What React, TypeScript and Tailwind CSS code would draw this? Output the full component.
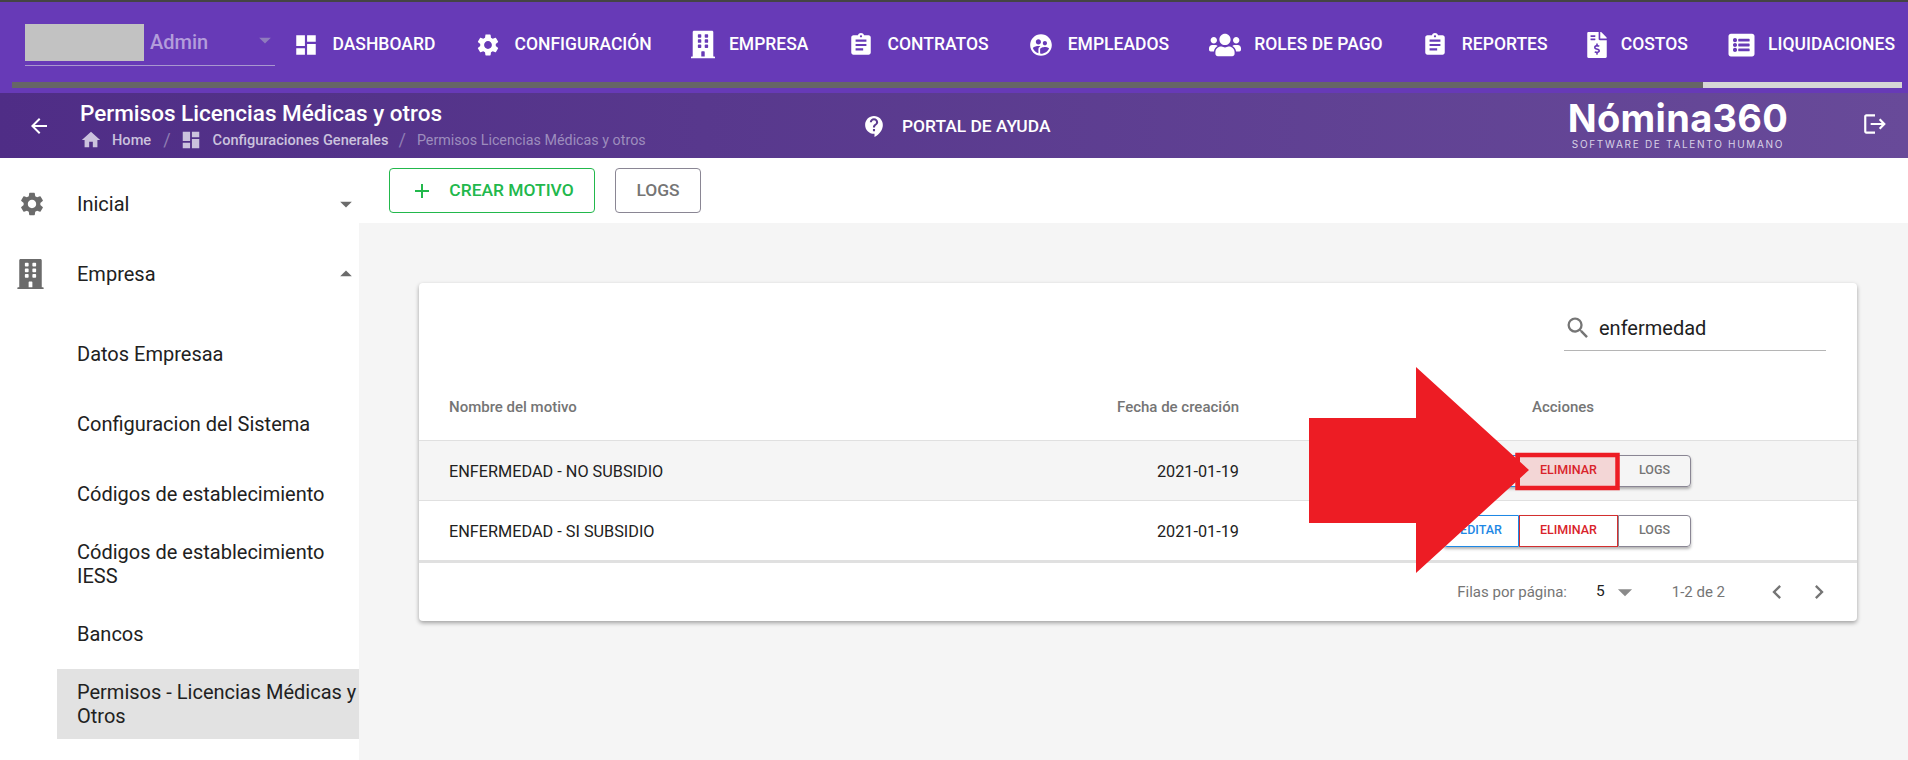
import {
  MdDashboard,
  MdSettings,
  MdAssignment,
  MdContactSupport,
  MdHome,
  MdArrowBack,
  MdLogout,
  MdSearch,
  MdAdd,
  MdArrowDropDown,
  MdArrowDropUp,
  MdChevronLeft,
  MdChevronRight,
  MdSupervisedUserCircle,
} from "react-icons/md";
import { FaBuilding, FaUsers, FaFileInvoiceDollar, FaListAlt } from "react-icons/fa";
import type { ReactNode } from "react";

const navItems: { label: string; icon: ReactNode }[] = [
  { label: "DASHBOARD", icon: <MdDashboard className="w-[26px] h-[26px]" /> },
  { label: "CONFIGURACIÓN", icon: <MdSettings className="w-[26px] h-[26px]" /> },
  { label: "EMPRESA", icon: <FaBuilding className="w-[24px] h-[29px]" /> },
  { label: "CONTRATOS", icon: <MdAssignment className="w-[26px] h-[26px]" /> },
  { label: "EMPLEADOS", icon: <MdSupervisedUserCircle className="w-[26px] h-[26px]" /> },
  { label: "ROLES DE PAGO", icon: <FaUsers className="w-[32px] h-[26px]" /> },
  { label: "REPORTES", icon: <MdAssignment className="w-[26px] h-[26px]" /> },
  { label: "COSTOS", icon: <FaFileInvoiceDollar className="w-[20px] h-[26px]" /> },
  { label: "LIQUIDACIONES", icon: <FaListAlt className="w-[27px] h-[26px]" /> },
];

const subItems = [
  "Datos Empresaa",
  "Configuracion del Sistema",
  "Códigos de establecimiento",
  "Códigos de establecimiento IESS",
  "Bancos",
];

function ActionButtons({ hover }: { hover?: boolean }) {
  return (
    <div className="ml-[204px] flex h-[32px] text-[12.5px] font-medium shadow-[0_2px_3px_rgba(0,0,0,0.3)] rounded">
      <button className="w-[76px] border border-[#1e88e5] rounded-l text-[#1e88e5]">EDITAR</button>
      <button
        className={`w-[99px] border border-[#d32f2f] text-[#d9232a] ${hover ? "bg-[#f3d6d6]" : "bg-white"}`}
      >
        ELIMINAR
      </button>
      <button className="w-[73px] border border-[#8a8694] rounded-r text-[#757575]">LOGS</button>
    </div>
  );
}

function Row({ name, date, hover, last }: { name: string; date: string; hover?: boolean; last?: boolean }) {
  return (
    <div
      className={`flex items-center pl-[30px] text-[16.25px] ${hover ? "bg-[#f5f5f5]" : ""} ${
        last ? "h-[62px] border-b-[3px] border-[#e0e0e0]" : "h-[60px] border-b border-[#e0e0e0]"
      }`}
    >
      <div className="w-[790px] pt-[3px] flex justify-between">
        <span>{name}</span>
        <span>{date}</span>
      </div>
      <ActionButtons hover={hover} />
    </div>
  );
}

export default function App() {
  return (
    <div className="w-[1908px] h-[760px] overflow-hidden bg-white font-['Roboto',sans-serif] text-[#212121] relative">
      {/* top nav */}
      <header className="h-[93px] bg-[#673ab7] border-t-2 border-[#444444] text-white">
        <div className="flex items-center h-[80px] pt-[5px]">
          <div className="ml-[25px] w-[250px] h-[42px] flex border-b border-[#a897cf] relative shrink-0">
            <div className="w-[119px] h-[37px] bg-[#c2c2c2]" />
            <span className="ml-[6px] mt-[3px] text-[20px] font-medium text-[#b39ddb]">Admin</span>
            <MdArrowDropDown className="absolute right-[-4px] top-[2px] w-[28px] h-[28px] text-[#8f7bbd]" />
          </div>
          <nav className="flex items-center ml-[18px] gap-[39.7px] text-[17.5px] font-medium">
            {navItems.map((n) => (
              <div key={n.label} className="flex items-center gap-[13.5px]">
                {n.icon}
                <span>{n.label}</span>
              </div>
            ))}
          </nav>
        </div>
        <div className="ml-[12px] mr-[6px] h-[6px] bg-[#666666] flex justify-end">
          <div className="w-[199px] bg-[#d6d6d6]" />
        </div>
      </header>

      {/* toolbar */}
      <div className="h-[65px] bg-gradient-to-r from-[#4f2d86] to-[#684a99] text-white flex items-center relative">
        <MdArrowBack className="ml-[27px] w-[24px] h-[24px] shrink-0" />
        <div className="ml-[29px] w-[782px] shrink-0">
          <div className="text-[22.5px] font-medium leading-[28px] mt-[-2px]">Permisos Licencias Médicas y otros</div>
          <div className="flex items-center text-[14.6px] font-medium text-[#cbc2dd] leading-[20px] mt-[2px]">
            <MdHome className="w-[22px] h-[22px]" />
            <span className="ml-[10px]">Home</span>
            <span className="ml-[12px] mr-[9px] text-[#8f7db3] font-normal text-[18px]">/</span>
            <MdDashboard className="w-[22px] h-[22px]" />
            <span className="ml-[11px]">Configuraciones Generales</span>
            <span className="ml-[10px] mr-[11px] text-[#8f7db3] font-normal text-[18px]">/</span>
            <span className="font-normal text-[14.3px] text-[#9d8dbd]">Permisos Licencias Médicas y otros</span>
          </div>
        </div>
        <div className="flex items-center gap-[15px] text-[17.4px] font-medium mt-[2px]">
          <MdContactSupport className="w-[25px] h-[25px]" />
          <span>PORTAL DE AYUDA</span>
        </div>
        <div className="absolute left-[1556px] top-[4px] w-[244px] flex flex-col items-center font-['Inter',sans-serif]">
          <span className="text-[38px] font-bold leading-[42px] tracking-[0.3px]">Nómina360</span>
          <span className="text-[10px] tracking-[1.7px] leading-[12px] mt-[-1px] whitespace-nowrap text-[#d9d2e6]">
            SOFTWARE DE TALENTO HUMANO
          </span>
        </div>
        <MdLogout className="absolute left-[1862px] top-[18px] w-[26px] h-[26px]" />
      </div>

      <div className="flex h-[602px]">
        {/* sidebar */}
        <aside className="w-[359px] shrink-0 bg-white text-[20px] leading-[24px]">
          <div className="h-[70px] mt-[11px] flex items-center relative">
            <MdSettings className="ml-[18px] w-[28px] h-[28px] text-[#6b6b6b]" />
            <span className="ml-[31px]">Inicial</span>
            <MdArrowDropDown className="absolute left-[332px] top-[21px] w-[28px] h-[28px] text-[#6b6b6b]" />
          </div>
          <div className="h-[70px] flex items-center relative">
            <FaBuilding className="ml-[17px] w-[27px] h-[30px] text-[#6b6b6b]" />
            <span className="ml-[33px]">Empresa</span>
            <MdArrowDropUp className="absolute left-[332px] top-[21px] w-[28px] h-[28px] text-[#6b6b6b]" />
          </div>
          <div className="mt-[10px]">
            {subItems.map((s) => (
              <div key={s} className="min-h-[70px] py-[11px] flex items-center pl-[77px] pr-[20px]">
                {s}
              </div>
            ))}
            <div className="ml-[57px] h-[70px] bg-[#e2e2e2] pl-[20px] flex items-center">
              Permisos - Licencias Médicas y Otros
            </div>
          </div>
        </aside>

        {/* main */}
        <main className="flex-1 flex flex-col">
          <div className="h-[65px] flex items-start pt-[10px] pl-[30px] gap-[20px] bg-white">
            <button className="w-[206px] h-[45px] border border-[#22b84c] rounded flex items-center justify-center gap-[15px] text-[#22b84c] text-[17.4px] font-medium">
              <MdAdd className="w-[24px] h-[24px]" />
              CREAR MOTIVO
            </button>
            <button className="w-[86px] h-[45px] border border-[#8a8694] rounded text-[#757575] text-[17.4px] font-medium">
              LOGS
            </button>
          </div>
          <div className="flex-1 bg-[#f5f5f5] pt-[60px] pl-[60px] pr-[51px]">
            <section className="bg-white rounded shadow-[0_2px_4px_rgba(0,0,0,0.35)] h-[338px]">
              <div className="h-[68px] flex justify-end pr-[31px] pt-[24px]">
                <div className="w-[262px] h-[44px] pb-[2px] border-b border-[#b5b5b5] flex items-center">
                  <MdSearch className="w-[28px] h-[28px] text-[#757575]" />
                  <span className="ml-[7px] text-[20px]">enfermedad</span>
                </div>
              </div>
              <div className="h-[90px] pt-[23px] flex items-center pl-[30px] border-b border-[#e0e0e0] text-[15px] font-medium text-[#757575]">
                <div className="w-[790px] flex justify-between">
                  <span>Nombre del motivo</span>
                  <span>Fecha de creación</span>
                </div>
                <span className="ml-[293px]">Acciones</span>
              </div>
              <Row name="ENFERMEDAD - NO SUBSIDIO" date="2021-01-19" hover />
              <Row name="ENFERMEDAD - SI SUBSIDIO" date="2021-01-19" last />
              <div className="h-[58px] flex items-center justify-end pr-[24px] text-[15px] text-[#757575]">
                <span>Filas por página:</span>
                <span className="ml-[29px] text-[#212121] text-[15.5px]">5</span>
                <MdArrowDropDown className="ml-[3px] w-[34px] h-[34px] text-[#8a8a8a]" />
                <span className="ml-[30px]">1-2 de 2</span>
                <MdChevronLeft className="ml-[38px] w-[28px] h-[28px]" />
                <MdChevronRight className="ml-[14px] w-[28px] h-[28px]" />
              </div>
            </section>
          </div>
        </main>
      </div>

      {/* annotation drawn over the screenshot */}
      <svg className="absolute left-[1309px] top-[367px]" width="313" height="206" viewBox="0 0 313 206">
        <polygon points="0,51 107,51 107,0 220,103 107,206 107,156 0,156" fill="#ed1c24" />
        <rect x="208.5" y="88" width="100" height="33" fill="none" stroke="#ed1c24" strokeWidth="4.5" />
      </svg>
    </div>
  );
}
